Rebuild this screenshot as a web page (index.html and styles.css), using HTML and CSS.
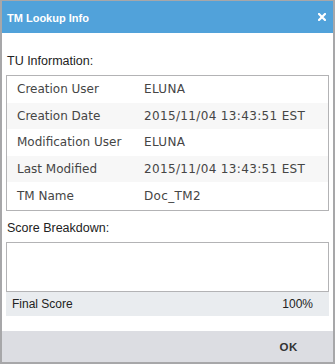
FILE: index.html
```html
<!DOCTYPE html>
<html lang="en">
<head>
  <meta charset="UTF-8" />
  <title>TM Lookup Info</title>
  <link rel="stylesheet" href="styles.css">
</head>
<body>
  <div class="dialog">
    <div class="dialog-header">
      <span class="dialog-title">TM Lookup Info</span>
      <span class="dialog-close" title="Close">
        <svg width="8" height="8" viewBox="0 0 8 8"><path d="M1 1L7 7M7 1L1 7" stroke="#fff" stroke-width="2.2" stroke-linecap="square"/></svg>
      </span>
    </div>

    <div class="dialog-body">
      <div class="section-label first">TU Information:</div>
      <div class="info-table">
        <div class="info-row"><span class="info-key">Creation User</span><span class="info-val">ELUNA</span></div>
        <div class="info-row"><span class="info-key">Creation Date</span><span class="info-val">2015/11/04 13:43:51 EST</span></div>
        <div class="info-row"><span class="info-key">Modification User</span><span class="info-val">ELUNA</span></div>
        <div class="info-row"><span class="info-key">Last Modified</span><span class="info-val">2015/11/04 13:43:51 EST</span></div>
        <div class="info-row"><span class="info-key">TM Name</span><span class="info-val">Doc_TM2</span></div>
      </div>

      <div class="section-label">Score Breakdown:</div>
      <div class="score-box"></div>
      <div class="final-score">
        <span>Final Score</span>
        <span>100%</span>
      </div>
    </div>

    <div class="dialog-footer">
      <button type="button" class="ok-button">OK</button>
    </div>
  </div>
</body>
</html>
```

FILE: styles.css
```css
* { box-sizing: border-box; }
html, body { margin: 0; padding: 0; background: #fff; }
body { font-family: "Liberation Sans", Arial, sans-serif; width: 335px; height: 364px; }

.dialog {
  width: 335px; height: 364px; background: #fff;
  border: 2px solid #a7a7a9; border-top-width: 1px;
  display: flex; flex-direction: column;
}

.dialog-header {
  height: 32px; background: #51a2da; color: #fff;
  display: flex; align-items: center; justify-content: space-between;
  padding: 0 7px 0 5px;
}
.dialog-title { font-weight: 700; font-size: 11px; line-height: 14px; padding-top: 1px; }
.dialog-close { display: flex; width: 8px; height: 8px; margin-top: 0; cursor: pointer; }

.dialog-body { flex: 1; padding: 0 4px; }

.section-label {
  font-size: 12.5px; line-height: 16px; color: #222;
  padding-left: 1px; margin: 9px 0 6px;
}
.section-label.first { margin-top: 20px; }

.info-table { border: 1px solid #b3b3b5; padding-bottom: 1px; }
.info-row {
  display: flex; align-items: center; height: 26.6px;
  font-family: "DejaVu Sans", sans-serif; font-size: 12px; color: #454545;
}
.info-row:nth-child(even) { background: #f7f7f7; }
.info-key { width: 137px; padding-left: 10px; flex-shrink: 0; }
.info-val { letter-spacing: 0.35px; }

.score-box { height: 50px; border: 1px solid #b3b3b5; }
.final-score {
  height: 24px; background: #e9ecef; font-size: 12px; color: #222;
  display: flex; align-items: center; justify-content: space-between;
  padding: 1px 16px 0 6px;
}

.dialog-footer {
  height: 31px; background: #dcdde2;
  display: flex; align-items: center; justify-content: flex-end;
  padding-right: 20px;
}
.ok-button {
  background: none; border: none; padding: 0 15px; height: 24px;
  font-family: "Liberation Sans", Arial, sans-serif; font-weight: 700; font-size: 11.5px;
  letter-spacing: 0.6px; color: #333; cursor: pointer;
}
```
